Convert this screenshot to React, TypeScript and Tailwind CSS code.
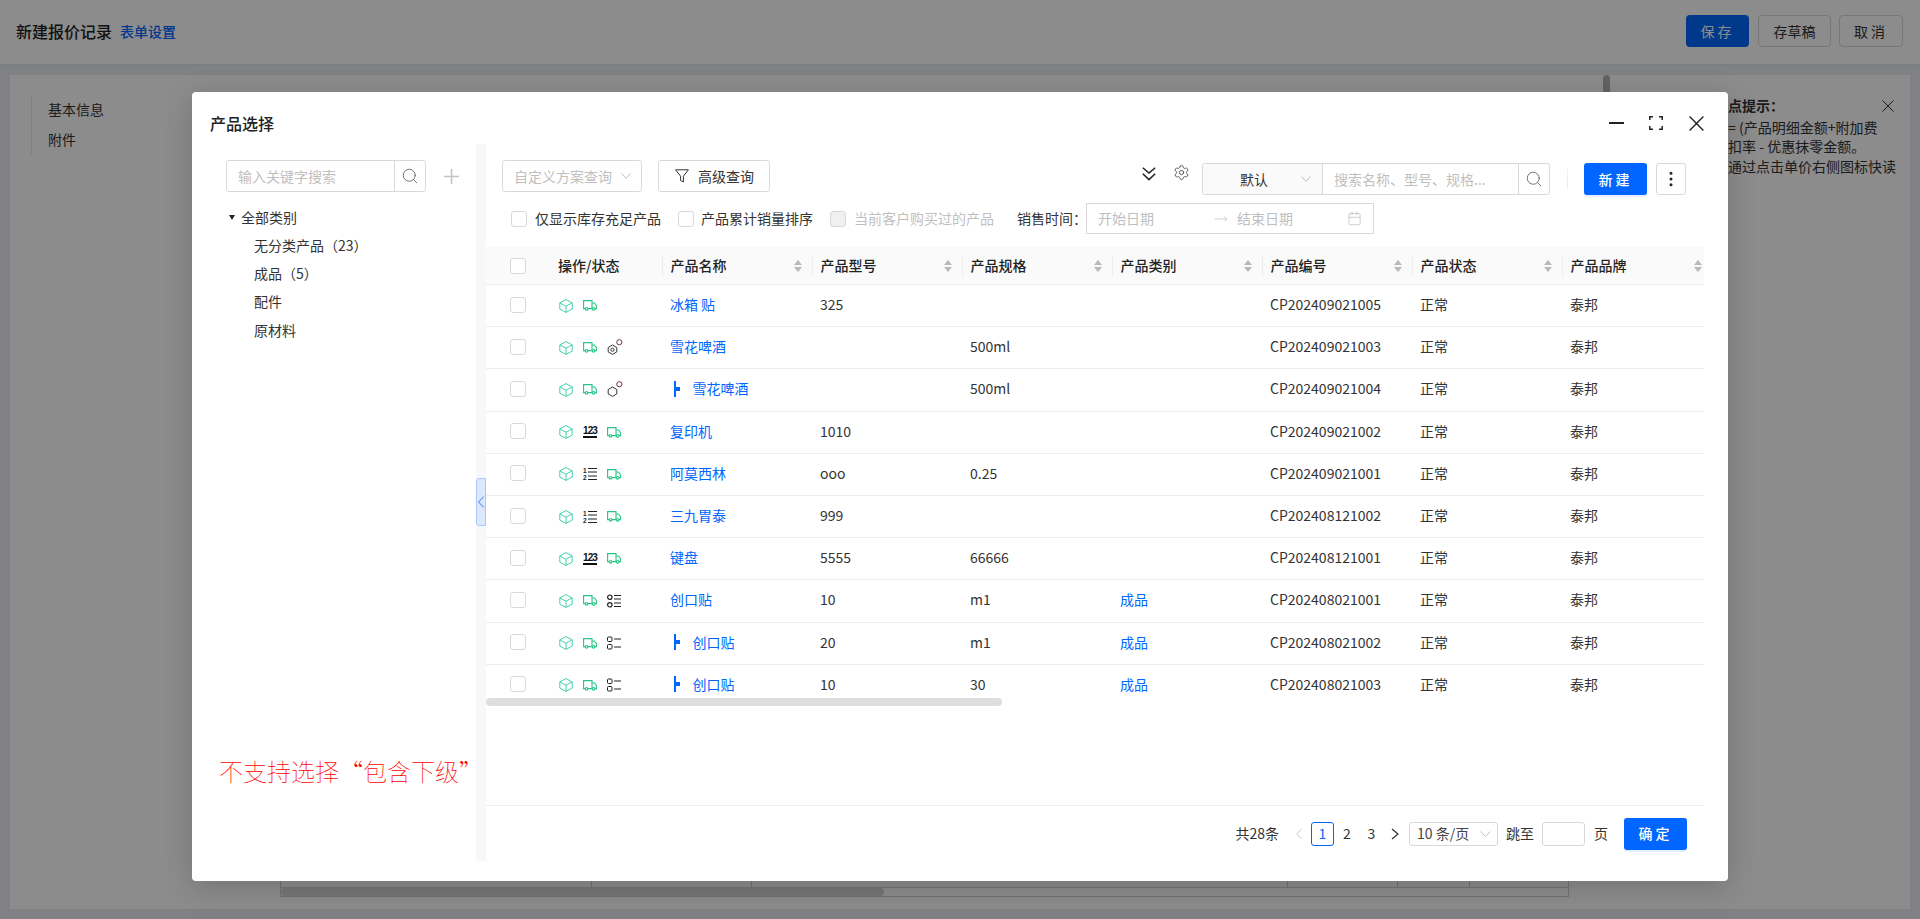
import React from 'react';
import { Search, ChevronLeft, Settings, MoreVertical, Calendar, MoveRight } from 'lucide-react';

const BLUE = 'text-[#0066ff]';

function Check({ disabled }: { disabled?: boolean }) {
  return <span className={`block w-4 h-4 rounded-[3px] border border-[#d9d9d9] shrink-0 ${disabled ? 'bg-[#f0f0f0]' : 'bg-white'}`} />;
}

function Sort() {
  return (
    <svg width="8" height="14" viewBox="0 0 8 14" className="shrink-0">
      <path d="M4 1 L8 6 H0 Z" fill="#b8b8b8" />
      <path d="M4 13 L0 8 H8 Z" fill="#b8b8b8" />
    </svg>
  );
}

function Cube() {
  return (
    <svg width="14" height="14" viewBox="0 0 14 14" fill="none" stroke="#45d0a8" strokeWidth="1" className="shrink-0">
      <path d="M7 .6 L13.2 3.9 V10.1 L7 13.4 L.8 10.1 V3.9 Z M.8 3.9 L7 7.2 L13.2 3.9 M7 7.2 V13.4" />
    </svg>
  );
}

function TruckIcon() {
  return (
    <svg width="14" height="11" viewBox="0 0 14 11" fill="none" stroke="#27c485" strokeWidth="1.1" className="shrink-0">
      <path d="M.6 .6 H9 V8.6 H.6 Z" />
      <path d="M9 3 H11.4 L13.4 5.4 V8.6 H9" />
      <circle cx="3.6" cy="8.8" r="1.3" fill="#fff" />
      <circle cx="10.6" cy="8.8" r="1.3" fill="#fff" />
    </svg>
  );
}

function Chev({ w = 10, h = 6, color = '#bfbfbf', cls = '' }: { w?: number; h?: number; color?: string; cls?: string }) {
  return (
    <svg width={w} height={h} viewBox={`0 0 ${w} ${h}`} fill="none" stroke={color} strokeWidth="1" className={`shrink-0 ${cls}`}>
      <path d={`M.5 .5 L${w / 2} ${h - 0.7} L${w - 0.5} .5`} />
    </svg>
  );
}

function Nut({ inner }: { inner?: boolean }) {
  return (
    <svg width="16" height="16" viewBox="0 0 16 16" fill="none" stroke="#333" strokeWidth="1" className="shrink-0 -mt-[2px]">
      <path d="M5.5 6 L9.8 8.5 V12.9 L5.5 15.4 L1.2 12.9 V8.5 Z" />
      {inner && <circle cx="5.5" cy="10.7" r="1.6" />}
      <circle cx="12.3" cy="3.2" r="2.6" stroke="#6e3b3b" />
    </svg>
  );
}

function Num123() {
  return (
    <span className="block w-[14px] shrink-0 border-b-2 border-[#111] text-center text-[10px] leading-[10px] font-bold tracking-[-0.9px] text-[#111] font-['Liberation_Sans',sans-serif]">123</span>
  );
}

function Ordered() {
  return (
    <svg width="14" height="14" viewBox="0 0 14 14" className="shrink-0">
      <text x="0" y="6" fontSize="6.5" fontWeight="700" fontFamily="Liberation Sans" fill="#222">1</text>
      <text x="0" y="13" fontSize="6.5" fontWeight="700" fontFamily="Liberation Sans" fill="#222">2</text>
      <path d="M5 1.5H14M5 5H14M5 9H14M5 12.5H14" stroke="#222" strokeWidth="1" />
    </svg>
  );
}

function CircList() {
  return (
    <svg width="14" height="14" viewBox="0 0 14 14" fill="none" stroke="#222" strokeWidth="1.2" className="shrink-0">
      <circle cx="2.8" cy="3.2" r="2.2" />
      <circle cx="2.8" cy="10.8" r="2.2" />
      <path d="M7 1.5H14M7 5H14M7 9H14M7 12.5H14" strokeWidth="1" />
    </svg>
  );
}

function SquareList() {
  return (
    <svg width="14" height="14" viewBox="0 0 14 14" fill="none" stroke="#222" strokeWidth="1" className="shrink-0">
      <rect x="0.5" y="1" width="4.5" height="4.5" rx="1" />
      <rect x="0.5" y="8.5" width="4.5" height="4.5" rx="1" />
      <path d="M7 3H14M7 11H14" />
    </svg>
  );
}

function Child() {
  return (
    <span className="flex items-center shrink-0 w-[23px] h-[16px]">
      <span className="block w-[2px] h-[16px] bg-[#0066ff]" />
      <span className="block w-[4px] h-[4px] bg-[#0066ff]" />
    </span>
  );
}

function Glass() {
  return <Search size={18} strokeWidth={1.2} className="shrink-0" />;
}

type Row = { extra: 'none' | 'nut' | 'nutinner' | 'n123' | 'ord' | 'circ' | 'sq'; child?: boolean; name: string; model: string; spec: string; cat: string; code: string };

const rows: Row[] = [
  { extra: 'none', name: '冰箱 贴', model: '325', spec: '', cat: '', code: 'CP202409021005' },
  { extra: 'nutinner', name: '雪花啤酒', model: '', spec: '500ml', cat: '', code: 'CP202409021003' },
  { extra: 'nut', child: true, name: '雪花啤酒', model: '', spec: '500ml', cat: '', code: 'CP202409021004' },
  { extra: 'n123', name: '复印机', model: '1010', spec: '', cat: '', code: 'CP202409021002' },
  { extra: 'ord', name: '阿莫西林', model: 'ooo', spec: '0.25', cat: '', code: 'CP202409021001' },
  { extra: 'ord', name: '三九胃泰', model: '999', spec: '', cat: '', code: 'CP202408121002' },
  { extra: 'n123', name: '键盘', model: '5555', spec: '66666', cat: '', code: 'CP202408121001' },
  { extra: 'circ', name: '创口贴', model: '10', spec: 'm1', cat: '成品', code: 'CP202408021001' },
  { extra: 'sq', child: true, name: '创口贴', model: '20', spec: 'm1', cat: '成品', code: 'CP202408021002' },
  { extra: 'sq', child: true, name: '创口贴', model: '10', spec: '30', cat: '成品', code: 'CP202408021003' },
];

function Icons({ extra }: { extra: Row['extra'] }) {
  return (
    <div className="flex items-center gap-[10px] pl-[9px] w-[111.6px] shrink-0 translate-y-[1px]">
      <Cube />
      {extra === 'n123' && <Num123 />}
      {extra === 'ord' && <Ordered />}
      <TruckIcon />
      {extra === 'nut' && <Nut />}
      {extra === 'nutinner' && <Nut inner />}
      {extra === 'circ' && <CircList />}
      {extra === 'sq' && <SquareList />}
    </div>
  );
}

const headCols = ['产品名称', '产品型号', '产品规格', '产品类别', '产品编号', '产品状态', '产品品牌'];

export default function App() {
  return (
    <div className="relative w-full h-[919px] overflow-hidden bg-[#e9ebf0] text-[14px] text-[#333] font-['Noto_Sans_CJK_SC',sans-serif]">
      {/* page behind the dialog */}
      <header className="h-[65px] bg-white border-b border-[#e3e3e3] flex items-center pl-4 pr-[17px] pb-[2px]">
        <span className="text-[16px] font-medium text-[#222]">新建报价记录</span>
        <span className="ml-2 text-[14px] font-medium text-[#0066ff]">表单设置</span>
        <div className="ml-auto flex items-center">
          <span className="w-[63px] h-8 rounded-[4px] bg-[#0066ff] text-white flex items-center justify-center tracking-[3px]">保存</span>
          <span className="ml-[9px] w-[73px] h-8 rounded-[4px] border border-[#d9d9d9] flex items-center justify-center">存草稿</span>
          <span className="ml-2 w-16 h-8 rounded-[4px] border border-[#d9d9d9] flex items-center justify-center tracking-[3px]">取消</span>
        </div>
      </header>
      <main className="mx-[10px] mt-[10px] h-[834px] bg-white flex overflow-hidden">
        <nav className="w-[270px] shrink-0 pt-[20px] pl-[21px]">
          <div className="border-l border-[#e9e9e9] pl-[16px] h-[60px]">
            <div className="h-[30px] flex items-center pb-[2px]">基本信息</div>
            <div className="h-[30px] flex items-center pb-[2px]">附件</div>
          </div>
        </nav>
        <section className="w-[1289px] shrink-0 flex flex-col justify-end pb-[12px]">
          <div className="border border-[#cfcfcf]">
            <div className="flex h-[100px] border-b border-[#cfcfcf]">
              <div className="w-[311px] border-r border-[#cfcfcf]" />
              <div className="w-[160px] border-r border-[#cfcfcf]" />
              <div className="w-[536px] border-r border-[#cfcfcf]" />
              <div className="w-[110px] border-r border-[#cfcfcf]" />
              <div className="w-[72px] border-r border-[#cfcfcf]" />
            </div>
            <div className="h-[8px] w-[603px] rounded-full bg-[#d7d7d7]" />
          </div>
        </section>
        <div className="ml-[34px] w-[7px] h-[100px] rounded-full bg-[#b5b5b5] shrink-0" />
        <aside className="relative ml-[90px] pt-[21px] whitespace-nowrap leading-[19.5px] flex-1 min-w-0">
          <div className="font-bold">重要点提示：</div>
          <div className="mt-[2px]">合计= (产品明细金额+附加费</div>
          <div>乘折扣率 - 优惠抹零金额。</div>
          <div>您可通过点击单价右侧图标快读</div>
          <svg width="12" height="12" viewBox="0 0 12 12" fill="none" stroke="#333" strokeWidth="1" className="absolute right-[16px] top-[25px]">
            <path d="M.5 .5 L11.5 11.5 M11.5 .5 L.5 11.5" />
          </svg>
        </aside>
      </main>

      {/* overlay */}
      <div className="absolute inset-0 bg-black/45" />

      {/* dialog */}
      <div className="absolute left-[192px] top-[92px] w-[1536px] h-[789px] bg-white rounded-[4px] shadow-[0_6px_30px_rgba(0,0,0,0.18)] flex flex-col">
        <div className="h-[52px] shrink-0 flex items-center pl-[18px] pr-[24px] pt-[10px]">
          <span className="text-[16px] font-medium text-[#222]">产品选择</span>
          <div className="ml-auto flex items-center text-[#222]">
            <span className="block w-[15px] h-[2px] bg-[#222]" />
            <svg width="14" height="14" viewBox="0 0 14 14" fill="none" stroke="#222" strokeWidth="1.5" className="ml-[25px]">
              <path d="M.8 4 V.8 H4 M10 .8 H13.2 V4 M13.2 10 V13.2 H10 M4 13.2 H.8 V10" />
            </svg>
            <svg width="15" height="15" viewBox="0 0 15 15" fill="none" stroke="#222" strokeWidth="1.4" className="ml-[26px]">
              <path d="M.6 .6 L14.4 14.4 M14.4 .6 L.6 14.4" />
            </svg>
          </div>
        </div>

        <div className="flex flex-1 min-h-0 mb-[20px]">
          {/* tree */}
          <div className="relative w-[284px] shrink-0 pt-[16px] pl-[34px]">
            <div className="flex items-center">
              <div className="w-[200px] h-8 rounded-[3px] border border-[#d9d9d9] flex items-center">
                <span className="flex-1 pl-[11px] text-[#bfbfbf]">输入关键字搜索</span>
                <span className="w-[31px] h-full border-l border-[#d9d9d9] flex items-center justify-center text-[#666]">
                  <Glass />
                </span>
              </div>
              <svg width="15" height="15" viewBox="0 0 15 15" stroke="#c4c4c4" strokeWidth="1.6" className="ml-[18px]">
                <path d="M7.5 0 V15 M0 7.5 H15" />
              </svg>
            </div>
            <div className="mt-[11px] text-[14px] text-[#333]">
              <div className="h-[28px] flex items-center pl-[3px]">
                <span className="w-0 h-0 border-x-[3.5px] border-x-transparent border-t-[5px] border-t-[#222]" />
                <span className="ml-[6px]">全部类别</span>
              </div>
              <div className="h-[28px] flex items-center pl-[28px]">无分类产品（23）</div>
              <div className="h-[28.5px] flex items-center pl-[28px]">成品（5）</div>
              <div className="h-[28.5px] flex items-center pl-[28px]">配件</div>
              <div className="h-[29px] flex items-center pl-[28px]">原材料</div>
            </div>
            <div className="absolute left-[27px] bottom-[74px] whitespace-nowrap text-[24px] leading-[32px] font-thin text-[#ff0000]">不支持选择“包含下级”</div>
          </div>

          {/* separator with handle */}
          <div className="relative w-[10px] shrink-0 bg-[#f7f8fc]">
            <div className="absolute left-0 top-[334px] w-[10px] h-[48px] rounded-l-[3px] bg-[#dce8ff] border border-[#a9c6ff] flex items-center justify-center">
              <ChevronLeft size={20} strokeWidth={1.4} className="shrink-0 text-[#7fa8ef]" />
            </div>
          </div>

          {/* right */}
          <div className="flex-1 min-w-0 flex flex-col pt-[16px]">
            <div className="h-[35px] flex items-start pl-[16px] pr-[42px]">
              <div className="w-[140px] h-8 rounded-[3px] border border-[#d9d9d9] flex items-center pl-[11px] pr-[10px] text-[#bfbfbf]">
                <span>自定义方案查询</span>
                <Chev cls="ml-auto" />
              </div>
              <div className="ml-[16px] w-[112px] h-8 rounded-[3px] border border-[#d9d9d9] flex items-center pl-[16px] text-[#333]">
                <svg width="14" height="14" viewBox="0 0 14 14" fill="none" stroke="#333" strokeWidth="1" className="shrink-0">
                  <path d="M.6 .8 H13.4 L8.4 7.2 V13 L5.6 11.5 V7.2 Z" />
                </svg>
                <span className="ml-[9px]">高级查询</span>
              </div>
              <div className="ml-auto flex items-center mt-[3px]">
                <svg width="14" height="14" viewBox="0 0 14 14" fill="none" stroke="#222" strokeWidth="1.5" className="shrink-0 -mt-[11px]">
                  <path d="M.8 .8 L7 6 L13.2 .8 M.8 6.8 L7 12.6 L13.2 6.8" />
                </svg>
                <Settings size={17} strokeWidth={1.2} className="ml-[17px] -mt-[13px] text-[#444]" />
                <div className="ml-[12px] flex h-8 w-[348px] rounded-[3px] border border-[#d9d9d9]">
                  <div className="w-[120px] bg-[#fafafa] flex items-center pl-[37px] border-r border-[#d9d9d9] rounded-l-[3px] text-[#333]">
                    <span>默认</span>
                    <Chev cls="ml-[33px]" />
                  </div>
                  <div className="w-[196px] flex items-center pl-[11px] border-r border-[#d9d9d9] text-[#bfbfbf]">搜索名称、型号、规格...</div>
                  <div className="flex-1 flex items-center justify-center text-[#666]"><Glass /></div>
                </div>
                <span className="ml-[17px] w-px h-5 bg-[#eeeeee]" />
                <div className="ml-[16px] w-[63px] h-8 rounded-[3px] bg-[#0066ff] text-white flex items-center justify-center tracking-[3px] font-medium shadow-[0_2px_0_rgba(0,102,255,0.1)]">新建</div>
                <div className="ml-[9px] w-[30px] h-8 rounded-[3px] border border-[#d9d9d9] flex items-center justify-center text-[#222]"><MoreVertical size={20} strokeWidth={1.6} /></div>
              </div>
            </div>

            <div className="mt-[8px] h-[31px] flex items-center pl-[25px]">
              <Check />
              <span className="ml-2 text-[#333]">仅显示库存充足产品</span>
              <span className="ml-[17px]"><Check /></span>
              <span className="ml-[7px] text-[#333]">产品累计销量排序</span>
              <span className="ml-[17px]"><Check disabled /></span>
              <span className="ml-2 text-[#bfbfbf]">当前客户购买过的产品</span>
              <span className="ml-[23px] text-[#333]">销售时间：</span>
              <div className="-ml-[1px] w-[288px] h-[31px] border border-[#d9d9d9] flex items-center pl-[11px] text-[#bfbfbf]">
                <span>开始日期</span>
                <MoveRight size={14} strokeWidth={1.2} className="ml-[60px]" />
                <span className="ml-[9px]">结束日期</span>
                <Calendar size={15} strokeWidth={1.2} className="ml-auto mr-[11px]" />
              </div>
            </div>

            {/* table */}
            <div className="mt-[13px] w-[1218px] overflow-hidden">
              <div className="h-[38px] bg-[#fafafa] border-b border-[#eeeeee] flex items-center font-medium text-[#222]">
                <div className="w-[64px] shrink-0 pl-[24px]"><Check /></div>
                <div className="w-[111.6px] shrink-0 pl-[8px]">操作/状态</div>
                {headCols.map((c) => (
                  <div key={c} className="w-[150px] shrink-0 h-[22px] border-l border-[#eeeeee] flex items-center justify-between pl-[8px] pr-[9.6px]">
                    <span>{c}</span>
                    <Sort />
                  </div>
                ))}
              </div>
              <div className="h-[413px] overflow-hidden">
                {rows.map((r) => (
                  <div key={r.code} className="h-[42.2px] border-b border-[#eeeeee] flex items-center text-[#333] pb-[2px]">
                    <div className="w-[64px] shrink-0 pl-[24px]"><Check /></div>
                    <Icons extra={r.extra} />
                    <div className={`w-[150px] shrink-0 pl-[8.4px] flex items-center ${BLUE}`}>
                      {r.child && <span className="ml-[3.6px] -mr-[4px]"><Child /></span>}
                      <span className="whitespace-pre">{r.name}</span>
                    </div>
                    <div className="w-[150px] shrink-0 pl-[8.4px]">{r.model}</div>
                    <div className="w-[150px] shrink-0 pl-[8.4px]">{r.spec}</div>
                    <div className={`w-[150px] shrink-0 pl-[8.4px] ${BLUE}`}>{r.cat}</div>
                    <div className="w-[150px] shrink-0 pl-[8.4px]">{r.code}</div>
                    <div className="w-[150px] shrink-0 pl-[8.4px]">正常</div>
                    <div className="w-[150px] shrink-0 pl-[8.4px]">泰邦</div>
                  </div>
                ))}
              </div>
              <div className="h-[8px] w-[516px] rounded-full bg-[#dedede]" />
            </div>

            <div className="flex-1" />

            {/* footer */}
            <div className="w-[1218px] h-[56px] shrink-0 border-t border-[#eeeeee] flex items-center justify-end pr-[17px] text-[#333]">
              <span>共28条</span>
              <ChevronLeft size={18} strokeWidth={1.2} className="ml-[11px] text-[#bfbfbf]" />
              <span className="ml-[3px] w-[23px] h-6 rounded-[3px] border border-[#0066ff] text-[#0066ff] flex items-center justify-center">1</span>
              <span className="w-[26px] text-center">2</span>
              <span className="w-[23px] text-center">3</span>
              <svg width="8" height="12" viewBox="0 0 8 12" fill="none" stroke="#333" strokeWidth="1.2" className="ml-[8px] shrink-0">
                <path d="M1 1 L7 6 L1 11" />
              </svg>
              <span className="ml-[10px] w-[89px] h-6 rounded-[3px] border border-[#d9d9d9] flex items-center pl-[7px] text-[#444]">
                10 条/页
                <Chev w={11} h={6} cls="ml-auto mr-[6px]" />
              </span>
              <span className="ml-2">跳至</span>
              <span className="ml-2 w-[43px] h-6 rounded-[3px] border border-[#d9d9d9]" />
              <span className="ml-[9px]">页</span>
              <span className="ml-4 w-[63px] h-8 rounded-[3px] bg-[#0066ff] text-white flex items-center justify-center tracking-[3px] font-medium shadow-[0_2px_0_rgba(0,102,255,0.1)]">确定</span>
            </div>
          </div>
        </div>
      </div>
    </div>
  );
}
